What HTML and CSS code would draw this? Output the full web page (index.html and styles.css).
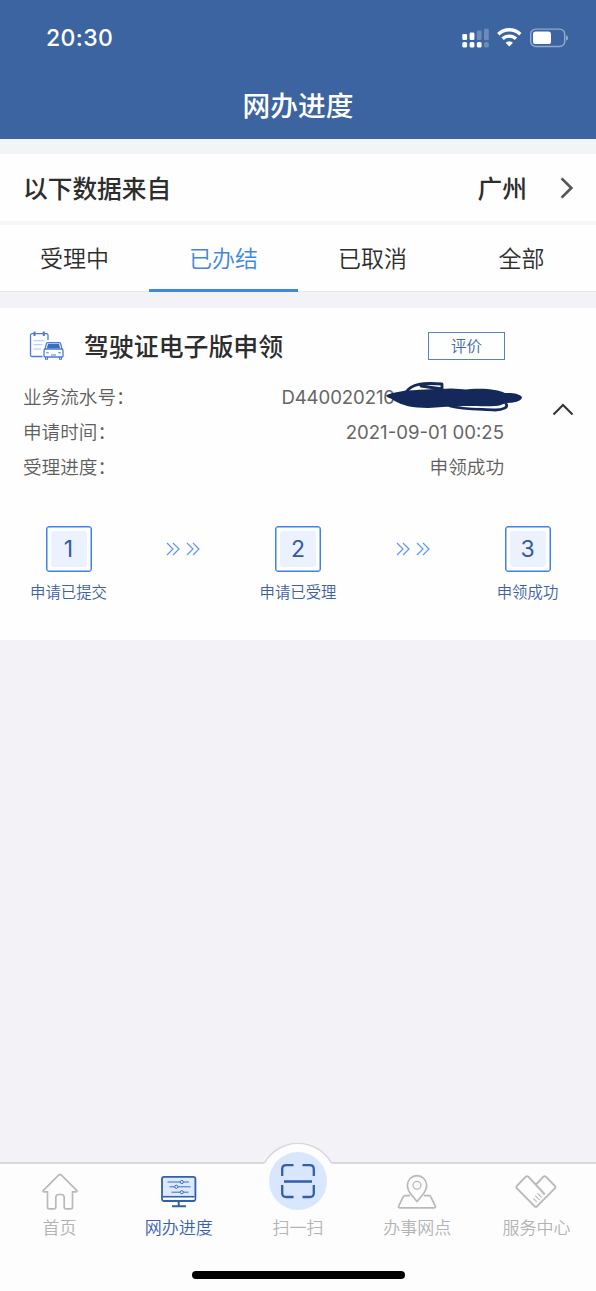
FILE: index.html
```html
<!DOCTYPE html>
<html lang="zh-CN">
<head>
<meta charset="utf-8">
<title>网办进度</title>
<link rel="stylesheet" href="styles.css">
</head>
<body>
<div class="app">
  <header class="header">
    <div class="status">
      <span class="time">20:30</span>
      <svg class="status-icons" width="108" height="24" viewBox="0 0 108 24" fill="#fff">
        <rect x="2.3" y="9" width="4.8" height="6" rx="1.3"/>
        <rect x="9.6" y="7.6" width="4.8" height="7.4" rx="1.3"/>
        <rect x="16.8" y="5.6" width="4.8" height="9.4" rx="1.3" opacity=".25"/>
        <rect x="24" y="3.8" width="4.8" height="11.4" rx="1.3" opacity=".25"/>
        <rect x="2.3" y="17" width="4.8" height="5.6" rx="1.5"/>
        <rect x="9.6" y="17" width="4.8" height="5.6" rx="1.5"/>
        <rect x="16.8" y="17" width="4.8" height="5.6" rx="1.5"/>
        <rect x="24" y="17" width="4.8" height="5.6" rx="1.5" opacity=".25"/>
        <g fill="none" stroke="#fff" stroke-width="3.4">
          <path d="M38.3 9.2a15.8 15.8 0 0 1 22 0"/>
          <path d="M42.6 13.8a9.6 9.6 0 0 1 13.4 0"/>
        </g>
        <path d="M49.3 21.5l-3.7-3.7a5.3 5.3 0 0 1 7.4 0z"/>
        <rect x="70.7" y="4.1" width="34" height="17.4" rx="5" fill="none" stroke="#fff" stroke-width="1.4" opacity=".45"/>
        <rect x="73" y="6.6" width="18" height="12.4" rx="2.6"/>
        <path d="M106.2 10.2c2.2.8 2.2 4.6 0 5.4z" opacity=".55"/>
      </svg>
    </div>
    <h1 class="title">网办进度</h1>
  </header>

  <section class="source">
    <span>以下数据来自</span>
    <span class="city">广州</span>
    <svg class="chevron" width="14" height="22" viewBox="0 0 14 22" fill="none" stroke="#555" stroke-width="2.7"><path d="M1.6 1.4L11.3 11 1.6 20.6"/></svg>
  </section>

  <nav class="tabs">
    <span class="tab">受理中</span>
    <span class="tab active">已办结</span>
    <span class="tab">已取消</span>
    <span class="tab">全部</span>
  </nav>

  <article class="card">
    <div class="card-head">
      <svg width="36" height="30" viewBox="0 0 36 30" fill="none" stroke="#4a7bdc" stroke-width="1.3">
        <path d="M13.5 25.500H3a1.500 1.500 0 0 1-1.500-1.500V4.200A1.500 1.500 0 0 1 3 2.700h14.500A1.500 1.500 0 0 1 19 4.200V9"/>
        <path d="M5.500.5v4.500M14.800.5v4.500" stroke-width="2"/>
        <path d="M4.500 9.700h11M4.500 13.700h9M4.500 18h7.500" stroke="#aac4f5" stroke-width="1"/>
        <path d="M18.800 11.700h11.400q1.200 0 1.500 1.200l1.300 5.400H16l1.300-5.400q.3-1.200 1.500-1.200z" fill="#fff"/>
        <path d="M19 12.800h11l1.200 4.400H17.800z" fill="#3e6cc4" stroke="none"/>
        <path d="M16.600 18h15.800q1.600 0 1.600 1.600v5.400q0 1-1 1H16q-1 0-1-1v-5.400q0-1.600 1.600-1.600z" fill="#fff"/>
        <path d="M16.500 26v2.200h2V26M30.500 26v2.200h2V26" stroke-width="1.1"/>
        <path d="M17.200 21.800h2.500M29.300 21.800h2.500M22 24h5" stroke-width="1.100"/>
      </svg>
      <h2 class="card-title">驾驶证电子版申领</h2>
      <button class="rate">评价</button>
    </div>
    <div class="details">
      <dl class="fields">
        <div class="field"><dt>业务流水号<span class="colon">：</span></dt><dd class="serial">D440020210<svg class="redaction" width="138" height="32" viewBox="0 0 138 32">
          <path d="M1 14.500c5-3 13-3.500 20-5 20-1 30-1.500 45-2 9 .3 14 1.500 20 .5 18-.8 27 1 34 4 8-.5 15 1 17 4 0 4-7 5.500-12 5.800-6 .2-9 3-14 3.200-16 .8-25-.5-38 .5-10-.2-18 1-30 1.500-16-.3-25-2-35-8-2-2-6-2-7-4.500z" fill="#14295a"/>
          <path d="M21 11C27 3 37 1.500 57 3v5L36 5M65 25c14 4 32 3 45 4 8 0 14-3 11-6" fill="none" stroke="#14295a" stroke-width="2.800" stroke-linecap="round" stroke-linejoin="round"/>
        </svg></dd></div>
        <div class="field"><dt>申请时间<span class="colon">：</span></dt><dd class="date">2021-09-01 00:25</dd></div>
        <div class="field"><dt>受理进度<span class="colon">：</span></dt><dd>申领成功</dd></div>
      </dl>
      <svg class="collapse" width="22" height="13" viewBox="0 0 22 13" fill="none" stroke="#333" stroke-width="2"><path d="M1.500 11.500L11 2l9.500 9.500"/></svg>
    </div>
    <div class="steps">
      <div class="step"><span class="box"><b>1</b></span><span>申请已提交</span></div>
      <svg class="arrows" width="34" height="14" viewBox="0 0 34 14"><path d="M1 1l6 6-6 6M7 1l6 6-6 6M21 1l6 6-6 6M27 1l6 6-6 6"/></svg>
      <div class="step"><span class="box"><b>2</b></span><span>申请已受理</span></div>
      <svg class="arrows" width="34" height="14" viewBox="0 0 34 14"><path d="M1 1l6 6-6 6M7 1l6 6-6 6M21 1l6 6-6 6M27 1l6 6-6 6"/></svg>
      <div class="step"><span class="box"><b>3</b></span><span>申领成功</span></div>
    </div>
  </article>

  <footer class="bottom">
    <svg class="hump" width="74" height="25" viewBox="0 0 74 25"><path d="M1 25V22.800Q3.200 22.600 4 21.200A38.300 38.300 0 0 1 70 21.200Q70.800 22.600 73 22.800V25z" fill="#fdfdfe"/><path d="M1 22.300Q3.200 22.200 4 21.200A38.300 38.300 0 0 1 70 21.200Q70.800 22.200 73 22.300" fill="none" stroke="#d7d7db" stroke-width="1.400"/></svg>
    <nav class="menu">
      <a class="item">
        <svg width="38" height="38" viewBox="0 0 38 38" fill="none" stroke="#b9b9b9" stroke-width="1.700" stroke-linejoin="round"><path d="M17.600 2.200a2 2 0 0 1 2.800 0L35.600 17.400q1 1.300-.7 1.400H31.500V34a1.900 1.900 0 0 1-1.900 1.900h-4.500a1.900 1.900 0 0 1-1.900-1.900V24.500q0-3-3-3h-2.400q-3 0-3 3V34a1.900 1.900 0 0 1-1.900 1.900H8.400A1.900 1.900 0 0 1 6.500 34V18.800H3.100q-1.700-.1-.7-1.400z"/></svg>
        <span>首页</span>
      </a>
      <a class="item current">
        <svg width="38" height="38" viewBox="0 0 38 38" fill="none" stroke="#315fa8" stroke-width="1.800"><rect x="2" y="3.800" width="33.400" height="24.200" rx="2.200" fill="#dce9ff"/><path d="M3 25.700h31.500" stroke="#fff"/><path d="M3 23.700h31.500" stroke-width="1.500"/><path d="M18.700 28v5M12 33.200h14" stroke-width="2"/><g stroke-width=".9"><path d="M7.500 9h12.500M23.500 9H29M9.500 13.800h5M18 13.800h12.500M11.500 19.200h8.500M23.500 19.200h5"/><circle cx="21.800" cy="9" r="1.600"/><circle cx="16.300" cy="13.800" r="1.600"/><circle cx="21.800" cy="19.200" r="1.600"/></g></svg>
        <span>网办进度</span>
      </a>
      <a class="item">
        <span class="scan"><svg width="38" height="38" viewBox="0 0 38 38" fill="none" stroke="#315fa8" stroke-width="2.300"><path d="M14.500 3.200H7.200Q3.200 3.200 3.200 7.200v6.800M23.500 3.200h7.300q4 0 4 4v6.800M3.200 23v8q0 4 4 4h7.300M34.800 23v8q0 4-4 4h-7.300M5 19.500h28"/></svg></span>
        <span>扫一扫</span>
      </a>
      <a class="item">
        <svg width="42" height="38" viewBox="0 0 42 38" fill="none" stroke="#b9b9b9" stroke-width="1.700" stroke-linejoin="round"><path d="M14 22.600H9Q7.800 22.600 7.300 23.700L2.700 33.200q-.7 1.600 1 1.600h34.600q1.700 0 1-1.600L34.700 23.700q-.5-1.100-1.700-1.100H28"/><path d="M21 28.500l-5.500-6.500Q11.400 17 11.400 12.300a9.600 9.600 0 0 1 19.200 0Q30.600 17 26.500 22z"/><circle cx="21" cy="12.300" r="3.900" stroke-width="1.300"/></svg>
        <span>办事网点</span>
      </a>
      <a class="item">
        <svg width="42" height="38" viewBox="0 0 42 38" fill="none" stroke="#b9b9b9" stroke-width="1.900" stroke-linejoin="round"><path d="M10.800 3.700q1.300-1 2.500 0L29.800 21.500M10.800 3.700L1.900 12.900q-1 1.300 0 2.500L19.400 33.200q1.400 1.200 2.800 0L39.800 15.400q1-1.200 0-2.500L30.900 3.700q-1.300-1-2.500 0L21.200 11.400"/><path d="M18.300 25.300l3.500 3.500M20.200 22.600l4.500 4.500M22.500 20.400l4.200 4.200" stroke-width="1.100"/></svg>
        <span>服务中心</span>
      </a>
    </nav>
    <div class="home-bar"></div>
  </footer>
</div>
</body>
</html>
```
FILE: styles.css
```css
* { box-sizing: border-box; }
body { margin: 0; background: #f2f2f7; }
svg { display: block; flex: none; }
.app {
  width: 596px;
  height: 1291px;
  display: flex;
  flex-direction: column;
  font-family: Inter, "Noto Sans CJK SC", sans-serif;
  font-weight: 350;
  color: #2d2d2d;
  overflow: hidden;
}
.header { height: 139px; background: #3b64a1; color: #fff; }
.status {
  height: 76px;
  padding: 0 28px 0 46px;
  display: flex;
  align-items: center;
  justify-content: space-between;
}
.status-icons { margin-bottom: 2px; }
.time { font-size: 23px; font-weight: 500; letter-spacing: .4px; }
.title {
  margin: 0;
  font-size: 27.7px;
  font-weight: 500;
  line-height: 60px;
  text-align: center;
}
.source {
  height: 86px;
  border-top: 15px solid #f2f5f6;
  border-bottom: 4px solid #f7f7f8;
  background: #fefefe;
  padding: 0 22px 2px 23px;
  display: flex;
  align-items: center;
  font-size: 24.7px;
  font-weight: 500;
}
.city { margin-left: auto; margin-right: 33px; }
.chevron { margin-top: 2px; }
.tabs {
  height: 67px;
  background: #fefefe;
  border-bottom: 1px solid #e8e8eb;
  display: grid;
  grid-template-columns: repeat(4, 1fr);
  font-size: 23px;
  line-height: 69px;
  text-align: center;
}
.tab { height: 67px; }
.active { color: #3e89de; border-bottom: 3px solid #3e89de; }
.card { height: 332px; margin-top: 16px; background: #fefefe; }
.card-head {
  height: 76px;
  padding: 0 91px 0 29px;
  display: flex;
  align-items: center;
}
.card-title { margin: 0 0 2px 19px; font-size: 24.9px; font-weight: 500; }
.rate {
  margin-left: auto;
  width: 77px;
  height: 28px;
  padding: 0;
  border: 1px solid #5982bd;
  background: none;
  color: #3b67ac;
  font: 350 15.5px/28px Inter, "Noto Sans CJK SC", sans-serif;
}
.details {
  height: 122px;
  padding: 0 22px 0 23px;
  display: flex;
  justify-content: space-between;
}
.fields { margin: -4px 0 0; width: 481px; font-size: 18.6px; line-height: 35.2px; color: #5e5e5e; }
.field { height: 35.2px; display: flex; justify-content: space-between; }
.field dd { margin: 0; }
.colon { color: #5e5e5e; }
.date, .serial { font-weight: 400; color: #666; }
.field .serial { position: relative; margin-right: 109px; letter-spacing: -.1px; }
.redaction { position: absolute; left: 104px; top: 1px; }
.collapse { margin-top: 19px; }
.steps {
  padding: 20px 22px 0;
  display: flex;
  justify-content: space-between;
  font-size: 15.4px;
  color: #3e62a0;
}
.step {
  width: 93px;
  display: flex;
  flex-direction: column;
  align-items: center;
  line-height: 42px;
}
.box {
  width: 46px;
  height: 46px;
  padding: 4px;
  border: 1.5px solid #3e82e8;
  border-radius: 3px;
  box-shadow: inset 0 0 0 .5px #3e82e8;
}
.box b {
  display: block;
  height: 36px;
  border-radius: 3px;
  background: #ebf2fe;
  color: #315b9e;
  font-size: 23px;
  font-weight: 400;
  line-height: 37px;
  text-align: center;
}
.arrows { margin-top: 16px; fill: none; stroke: #5b98f1; stroke-width: 1.2; }
.bottom {
  position: relative;
  height: 129px;
  margin-top: auto;
  border-top: 2px solid #d9d9dd;
  background: #fdfdfe;
}
.hump { position: absolute; left: 261px; top: -23px; }
.menu { display: grid; grid-template-columns: repeat(5, 1fr); padding-top: 9px; }
.item {
  position: relative;
  display: flex;
  flex-direction: column;
  align-items: center;
  font-size: 17px;
  line-height: 34px;
  color: #b3b3b3;
}
.current { color: #3762ad; }
.scan {
  width: 58px;
  height: 58px;
  margin: -21px 0 1px;
  border-radius: 50%;
  background: #d9e7fe;
  display: flex;
  align-items: center;
  justify-content: center;
}
.home-bar { width: 213px; height: 8px; margin: 26px auto 0; border-radius: 4px; background: #000; }
```
